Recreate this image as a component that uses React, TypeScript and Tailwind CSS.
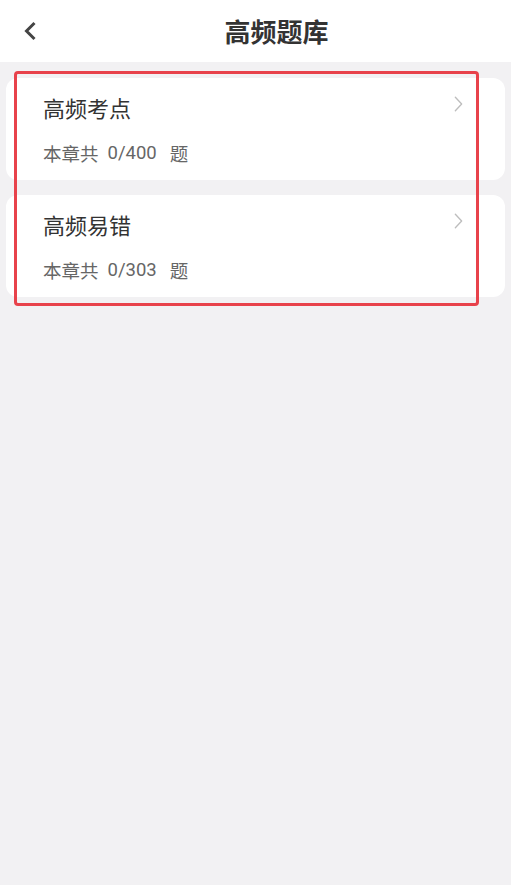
const items = [
  { title: "高频考点", done: 0, total: 400 },
  { title: "高频易错", done: 0, total: 303 },
];

function Chevron({ className }: { className?: string }) {
  return (
    <svg viewBox="0 0 10 18" className={className} fill="none" stroke="currentColor" strokeWidth="1.5" strokeLinecap="round" strokeLinejoin="round">
      <path d="M1.5 1.5 L8.5 9 L1.5 16.5" />
    </svg>
  );
}

export default function App() {
  return (
    <div
      className="relative min-h-[885px] w-full bg-[#f2f1f3]"
      style={{ fontFamily: '"Noto Sans CJK SC", "Noto Sans", sans-serif' }}
    >
      <header className="flex h-[62px] items-center bg-white">
        <button className="ml-[22px] flex h-[24px] w-[16px] items-center justify-center text-[#444]">
          <svg viewBox="0 0 14 20" className="h-[20px] w-[14px]" fill="none" stroke="currentColor" strokeWidth="3" strokeLinejoin="miter">
            <path d="M11.5 2 L3.5 10 L11.5 18" />
          </svg>
        </button>
        <h1 className="flex-1 pl-[4px] text-center text-[26px] font-bold leading-none text-[#333]">高频题库</h1>
      </header>

      <main className="flex flex-col gap-[15px] px-[6px] pt-[16px]">
        {items.map((it) => (
          <div key={it.title} className="h-[102px] rounded-[12px] bg-white pl-[37px] pr-[42px] pt-[14px]">
            <div className="flex h-[30px] items-center justify-between">
              <span className="text-[22px] leading-none text-[#333]">{it.title}</span>
              <Chevron className="-mt-[6px] h-[18px] w-[9px] text-[#bdbdbd]" />
            </div>
            <div className="mt-[18px] flex h-[26px] items-center text-[18.5px] leading-none text-[#666]">
              <span>本章共</span>
              <span className="ml-[9px] font-['Roboto',sans-serif]">
                {it.done}/{it.total}
              </span>
              <span className="ml-[13px]">题</span>
            </div>
          </div>
        ))}
      </main>

      <div className="pointer-events-none absolute left-[14px] top-[71px] h-[235px] w-[465px] rounded-[4px] border-[3px] border-[#e8424b]" />
    </div>
  );
}
